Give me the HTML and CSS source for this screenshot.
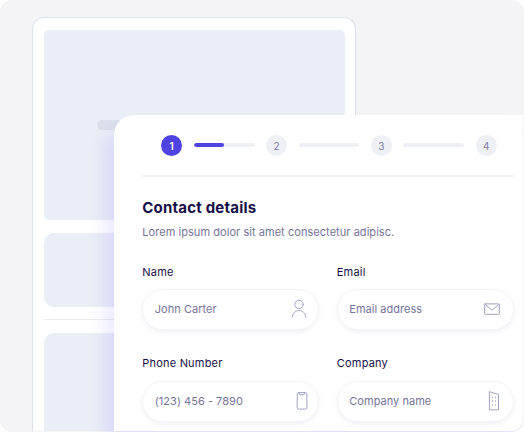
FILE: index.html
```html
<!DOCTYPE html>
<html lang="en">
<head>
<meta charset="utf-8">
<title>Contact details</title>
<link rel="stylesheet" href="styles.css">
</head>
<body>
<main class="scene">
  <section class="window">
    <div class="hero"><span class="pill"></span></div>
    <div class="block"></div>
    <div class="rule"></div>
    <div class="block block-last"></div>
  </section>
  <section class="card">
    <div class="steps">
      <span class="step step-active">1</span>
      <span class="track"><span class="fill"></span></span>
      <span class="step">2</span>
      <span class="track"></span>
      <span class="step">3</span>
      <span class="track"></span>
      <span class="step">4</span>
    </div>
    <div class="divider"></div>
    <h1 class="title">Contact details</h1>
    <p class="lead">Lorem ipsum dolor sit amet consectetur adipisc.</p>
    <div class="fields">
      <div class="field">
        <div class="label">Name</div>
        <div class="input"><span>John Carter</span>
          <svg class="icon" width="16" height="20" viewBox="0 0 16 20"><circle cx="8" cy="5.500" r="4.200"/><path d="M1.300 18.400C1.300 14.400 4.200 11.500 8 11.500s6.700 2.900 6.700 6.900"/></svg>
        </div>
      </div>
      <div class="field">
        <div class="label">Email</div>
        <div class="input"><span>Email address</span>
          <svg class="icon icon-mail" width="16" height="20" viewBox="0 0 16 20"><rect x=".6" y="4.900" width="14.800" height="10.400" rx="1"/><path d="M1 5.200l7 6.100L15 5.200"/></svg>
        </div>
      </div>
      <div class="field">
        <div class="label">Phone Number</div>
        <div class="input"><span>(123) 456 - 7890</span>
          <svg class="icon icon-phone" width="12" height="20" viewBox="0 0 12 20"><rect x="1.200" y="1.600" width="9.700" height="16.500" rx="1.500"/><path d="M3.400 1.800l.8 1.900h3.700l.8-1.900"/></svg>
        </div>
      </div>
      <div class="field">
        <div class="label">Company</div>
        <div class="input"><span>Company name</span>
          <svg class="icon icon-building" width="12" height="20" viewBox="0 0 12 20"><path d="M1.400 18.400V.7l9.100 2.700v15z"/><path class="dots" d="M4.500 5.700v1.400M7.600 5.700v1.400M4.500 9.500v1.400M7.600 9.500v1.400M4.500 13.300v1.400M7.600 13.300v1.400"/></svg>
        </div>
      </div>
    </div>
  </section>
</main>
</body>
</html>
```

FILE: styles.css
```css
* { box-sizing: border-box; }
body {
  margin: 0;
  background: #fff;
  font-family: Inter, "Liberation Sans", sans-serif;
  overflow: hidden;
}
.scene {
  position: relative;
  width: 523.5px;
  height: 432px;
  padding: 16.500px 0 0 32px;
  border-radius: 12px;
  background: #f4f4f7;
  overflow: hidden;
}
.window {
  width: 324px;
  height: 414.500px;
  padding: 12px 10.500px 0 11px;
  border: 1.300px solid #dce1eb;
  border-bottom: 0;
  border-radius: 12px 12px 0 0;
  background: #fff;
  overflow: hidden;
}
.hero {
  height: 190.500px;
  padding: 90px 0 0 53px;
  border-radius: 5px;
  background: #eaeef6;
}
.pill {
  display: block;
  width: 60px;
  height: 10px;
  border-radius: 5px;
  background: #dce0ea;
}
.block {
  height: 74px;
  margin-top: 13px;
  border-radius: 10px;
  background: #eaeef6;
}
.rule {
  height: 1px;
  margin-top: 12px;
  background: #eaecf3;
}
.block-last { height: 110px; }
.card {
  position: absolute;
  left: 114px;
  top: 115px;
  width: 408.500px;
  height: 316px;
  padding: 19.700px 8.500px 0 28.300px;
  border-radius: 20px 0 12px 0;
  background: #fff;
  box-shadow: -9px 14px 20px -2px rgba(74, 58, 255, .13);
}
.steps {
  display: flex;
  align-items: center;
  gap: 11.300px;
  padding-left: 18.700px;
}
.step {
  flex: none;
  width: 21.400px;
  height: 21.400px;
  border-radius: 50%;
  background: #eff0f6;
  color: #817e9e;
  font-size: 10px;
  line-height: 22px;
  text-align: center;
}
.step-active {
  background: #4f43e3;
  color: #fff;
  font-weight: 600;
}
.track {
  flex: none;
  width: 60.900px;
  height: 4px;
  border-radius: 2px;
  background: #eff0f6;
  overflow: hidden;
}
.fill {
  display: block;
  width: 50%;
  height: 100%;
  border-radius: 2px;
  background: #4f43e3;
}
.divider {
  height: 2px;
  margin-top: 19px;
  border-radius: 1px;
  background: #f0f0f7;
}
.title {
  margin: 20.500px 0 0;
  color: #170f49;
  font-size: 15px;
  font-weight: 700;
  letter-spacing: .2px;
  line-height: 20px;
  white-space: nowrap;
}
.lead {
  margin: 6px 0 0;
  color: #77749a;
  font-size: 11px;
  letter-spacing: .05px;
  line-height: 16px;
  white-space: nowrap;
}
.fields {
  display: grid;
  grid-template-columns: 177px 177px;
  column-gap: 17.500px;
  row-gap: 25.400px;
  margin-top: 24px;
}
.label {
  height: 16px;
  margin-bottom: 9.200px;
  color: #170f49;
  font-size: 11px;
  letter-spacing: .2px;
  line-height: 16px;
}
.input {
  display: flex;
  align-items: center;
  justify-content: space-between;
  height: 41.300px;
  padding: 0 11px 1px 11.500px;
  border: 1px solid #f4f4f8;
  border-radius: 21px;
  background: #fff;
  box-shadow: 0 2px 5px rgba(19, 18, 66, .06);
  color: #77749a;
  font-size: 11px;
  letter-spacing: .03px;
  white-space: nowrap;
}
.icon {
  fill: none;
  stroke: #a0a3c4;
  stroke-width: 1;
  stroke-linecap: round;
  stroke-linejoin: round;
}
.icon-mail { margin-right: 2px; }
.icon-phone { margin-right: -1px; }
.icon-building { margin-right: 2px; }
.icon .dots { stroke-linecap: butt; }
```
